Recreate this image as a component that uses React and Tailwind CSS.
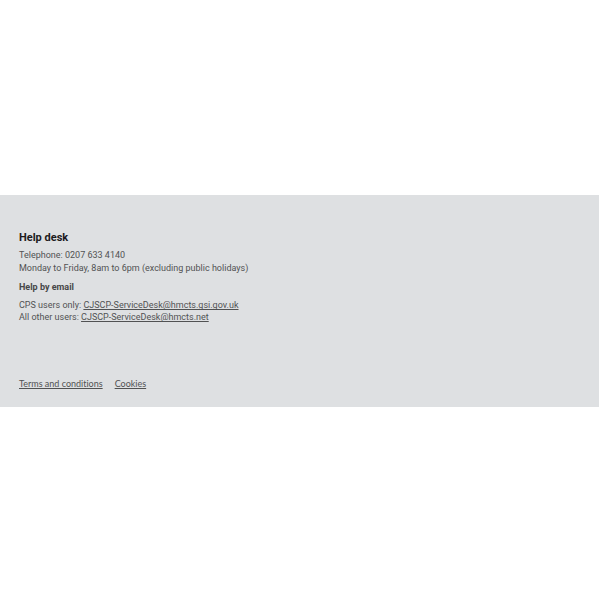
const link = "underline underline-offset-1 [text-decoration-skip-ink:none]";

export default function App() {
  return (
    <div className="flex min-h-screen flex-col justify-center bg-white pt-0.5 font-['Roboto','Liberation_Sans',sans-serif]">
      <footer className="mr-px bg-[#dee0e2] px-[19px] pt-[37px] pb-[17px] text-[9px] leading-3 text-[#515253]">
        <h2 className="text-[11px] leading-3 font-bold text-[#1c1a1c]">Help desk</h2>
        <p className="mt-[5px] leading-[13px]">
          Telephone: 0207 633 4140
          <br />
          Monday to Friday, 8am to 6pm (excluding public holidays)
        </p>
        <h3 className="mt-1.5 font-bold text-[#464748]">Help by email</h3>
        <p className="mt-1.5">
          CPS users only:{" "}
          <a className={link} href="mailto:CJSCP-ServiceDesk@hmcts.gsi.gov.uk">CJSCP-ServiceDesk@hmcts.gsi.gov.uk</a>
          <br />
          All other users:{" "}
          <a className={link} href="mailto:CJSCP-ServiceDesk@hmcts.net">CJSCP-ServiceDesk@hmcts.net</a>
        </p>
        <ul className="mt-[55px] flex gap-3 font-['Lato','Liberation_Sans',sans-serif] [font-variant-ligatures:none]">
          <li><a className={link} href="#terms">Terms and conditions</a></li>
          <li><a className={link} href="#cookies">Cookies</a></li>
        </ul>
      </footer>
    </div>
  );
}
